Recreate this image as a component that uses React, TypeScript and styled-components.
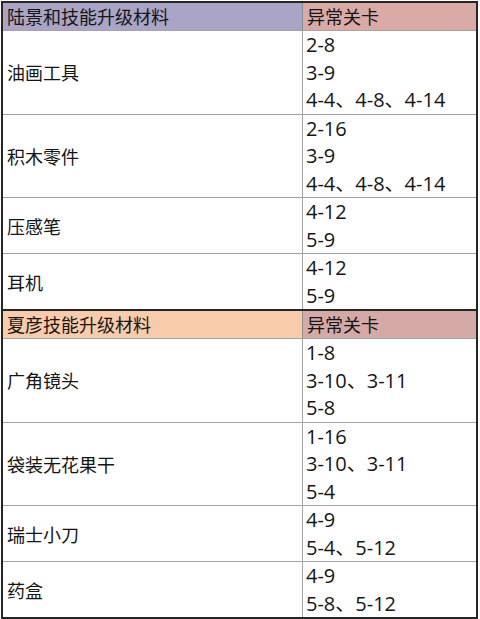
import React from 'react';
import styled, { createGlobalStyle } from 'styled-components';

const GlobalStyle = createGlobalStyle`
  html, body {
    margin: 0;
    padding: 0;
    background: #ffffff;
  }
  body {
    font-family: "Noto Sans CJK SC", "Noto Sans", sans-serif;
    color: #151515;
  }
`;

const Table = styled.div`
  width: 473px;
  margin: 1px 0 0 1px;
  border: 2px solid #262626;
  display: flex;
  flex-direction: column;
`;

const Section = styled.div<{ $first?: boolean }>`
  display: flex;
  flex-direction: column;
  border-top: ${p => (p.$first ? 'none' : '2px solid #262626')};
`;

const HeaderRow = styled.div`
  display: grid;
  grid-template-columns: 300px 1fr;
  height: 27px;
`;

const HeaderCell = styled.div<{ $bg: string; $divider?: boolean }>`
  background: ${p => p.$bg};
  font-size: 18px;
  line-height: 27px;
  padding-left: 4px;
  white-space: nowrap;
  border-right: ${p => (p.$divider ? '1px solid #8f8f8f' : 'none')};
`;

const Row = styled.div`
  display: grid;
  grid-template-columns: 300px 1fr;
  border-top: 1px solid #a4a4a4;
`;

const NameCell = styled.div`
  display: flex;
  align-items: center;
  font-size: 18px;
  padding-left: 4px;
  border-right: 1px solid #a4a4a4;
`;

const StageCell = styled.div`
  display: flex;
  flex-direction: column;
  padding-left: 3px;
`;

const StageLine = styled.div`
  font-family: "Open Sans", "Noto Sans CJK SC", sans-serif;
  font-size: 20px;
  line-height: 27.5px;
  white-space: nowrap;
`;

type Item = { name: string; stages: string[] };

type Group = { title: string; titleBg: string; stageBg: string; items: Item[] };

const groups: Group[] = [
  {
    title: '陆景和技能升级材料',
    titleBg: '#aaa4c6',
    stageBg: '#daaaa7',
    items: [
      { name: '油画工具', stages: ['2-8', '3-9', '4-4、4-8、4-14'] },
      { name: '积木零件', stages: ['2-16', '3-9', '4-4、4-8、4-14'] },
      { name: '压感笔', stages: ['4-12', '5-9'] },
      { name: '耳机', stages: ['4-12', '5-9'] },
    ],
  },
  {
    title: '夏彦技能升级材料',
    titleBg: '#f8cbab',
    stageBg: '#d5a9a6',
    items: [
      { name: '广角镜头', stages: ['1-8', '3-10、3-11', '5-8'] },
      { name: '袋装无花果干', stages: ['1-16', '3-10、3-11', '5-4'] },
      { name: '瑞士小刀', stages: ['4-9', '5-4、5-12'] },
      { name: '药盒', stages: ['4-9', '5-8、5-12'] },
    ],
  },
];

const App: React.FC = () => {
  return (
    <>
      <GlobalStyle />
      <Table>
        {groups.map((g, gi) => (
          <Section key={g.title} $first={gi === 0}>
            <HeaderRow>
              <HeaderCell $bg={g.titleBg} $divider>{g.title}</HeaderCell>
              <HeaderCell $bg={g.stageBg}>异常关卡</HeaderCell>
            </HeaderRow>
            {g.items.map(item => (
              <Row key={item.name}>
                <NameCell>{item.name}</NameCell>
                <StageCell>
                  {item.stages.map(s => (
                    <StageLine key={s}>{s}</StageLine>
                  ))}
                </StageCell>
              </Row>
            ))}
          </Section>
        ))}
      </Table>
    </>
  );
};

export default App;
